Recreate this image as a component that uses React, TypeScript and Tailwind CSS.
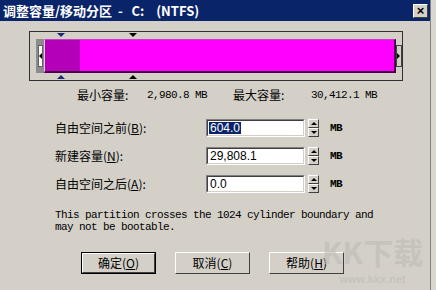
import React from "react";

const cjk = { fontFamily: '"Noto Sans CJK SC", "Noto Sans", sans-serif' };
const mono = { fontFamily: '"Liberation Mono", "DejaVu Sans Mono", monospace' };
const sans = { fontFamily: '"Liberation Sans", Arial, sans-serif' };

const Raised = ({ className = "", children }: { className?: string; children?: React.ReactNode }) => (
  <div className={`border border-t-white border-l-white border-r-[#404040] border-b-[#404040] bg-[#d4d0c8] ${className}`}>
    {children}
  </div>
);

const Spinner = () => (
  <div className="flex flex-col w-[11px] h-[18px] ml-[3px]">
    {["up", "down"].map((d) => (
      <Raised key={d} className="flex-1 flex items-center justify-center">
        <div
          className={
            d === "up"
              ? "w-0 h-0 border-l-[3px] border-r-[3px] border-b-[3px] border-l-transparent border-r-transparent border-b-black"
              : "w-0 h-0 border-l-[3px] border-r-[3px] border-t-[3px] border-l-transparent border-r-transparent border-t-black"
          }
        />
      </Raised>
    ))}
  </div>
);

type RowProps = { label: string; hotkey: string; value: string; selected?: boolean };

const FieldRow = ({ label, hotkey, value, selected }: RowProps) => (
  <div className="flex items-center h-[18px] pl-[55px]">
    <div className="w-[151px] text-[12px] leading-none text-black" style={cjk}>
      {label}(<span className="underline">{hotkey}</span>):
    </div>
    <div className="w-[99px] h-[18px] border border-t-[#808080] border-l-[#808080] border-r-white border-b-white">
      <div className="w-full h-full border border-t-[#404040] border-l-[#404040] border-r-[#d4d0c8] border-b-[#d4d0c8] bg-white flex items-center pl-[1px]">
        <span
          className={`text-[12px] leading-[12px] px-[1px] ${selected ? "bg-[#0a246a] text-white" : "text-black"}`}
          style={sans}
        >
          {value}
        </span>
      </div>
    </div>
    <Spinner />
    <span className="ml-[11px] text-[11px] tracking-[-0.6px] font-bold text-black" style={mono}>
      MB
    </span>
  </div>
);

const Button = ({ label, hotkey, isDefault }: { label: string; hotkey: string; isDefault?: boolean }) => (
  <div className={`w-[75px] h-[22px] ${isDefault ? "border border-black" : ""}`}>
    <Raised className="w-full h-full flex items-center justify-center">
      <span className="text-[12px] leading-none text-black" style={cjk}>
        {label}(<span className="underline">{hotkey}</span>)
      </span>
    </Raised>
  </div>
);

const Marker = ({ x, up, blue }: { x: number; up?: boolean; blue?: boolean }) => (
  <div
    className={`absolute w-0 h-0 border-l-[4px] border-r-[4px] border-l-transparent border-r-transparent ${
      up
        ? `bottom-[1px] border-b-[4px] ${blue ? "border-b-[#1a2a7a]" : "border-b-black"}`
        : `top-[1px] border-t-[4px] ${blue ? "border-t-[#1a2a7a]" : "border-t-black"}`
    }`}
    style={{ left: x }}
  />
);

export default function App() {
  return (
    <div className="relative w-[436px] h-[290px] flex bg-[#dad7d1] overflow-hidden">
      <div className="w-[431px] h-full bg-[#d4d0c8] flex flex-col border-r border-[#808080]">
        {/* title bar */}
        <div className="h-[21px] bg-[#0a246a] flex items-center justify-between pl-[3px] pr-[2px]">
          <span className="text-white text-[13px] font-bold leading-none whitespace-pre" style={cjk}>
            调整容量/移动分区  -   C:    (NTFS)
          </span>
          <Raised className="w-[15px] h-[14px] flex items-center justify-center">
            <span className="text-[13px] font-bold leading-none text-black" style={sans}>
              ×
            </span>
          </Raised>
        </div>

        {/* partition bar */}
        <div className="relative mt-[10px] ml-[29px] w-[374px] h-[50px] border border-[#303030] bg-[#d4d0c8]">
          <Marker x={27} blue />
          <Marker x={99} />
          <Marker x={27} up blue />
          <Marker x={99} up />
          <div className="flex items-stretch h-[34px] mt-[7px] ml-[6px]">
            <div className="w-[8px] bg-[#8c8c8c] flex items-center justify-center">
              <div className="w-[5px] h-[22px] bg-white border border-[#606060] flex items-center justify-center">
                <div className="w-0 h-0 border-t-[3px] border-b-[3px] border-r-[3px] border-t-transparent border-b-transparent border-r-black" />
              </div>
            </div>
            <div className="w-[352px] flex border-l border-l-[#f0c0f0] border-b-2 border-b-[#4a004a] border-r-2 border-r-[#4a004a] border-t border-t-[#c040c0]">
              <div className="w-[35px] bg-[#b400b8]" />
              <div className="flex-1 bg-[#ff00ff]" />
            </div>
            <div className="w-[6px] h-[22px] self-center border border-[#404040] bg-[#d4d0c8] flex items-center">
              <div className="w-0 h-0 border-t-[3px] border-b-[3px] border-l-[3px] border-t-transparent border-b-transparent border-l-black" />
            </div>
          </div>
        </div>

        {/* min / max */}
        <div className="mt-[8px] h-[12px] flex items-center pl-[77px] text-black">
          <span className="w-[70px] text-[12px] leading-none" style={cjk}>最小容量:</span>
          <span className="w-[86px] text-[11px] tracking-[-0.6px] leading-none" style={mono}>2,980.8 MB</span>
          <span className="w-[78px] text-[12px] leading-none" style={cjk}>最大容量:</span>
          <span className="text-[11px] tracking-[-0.6px] leading-none" style={mono}>30,412.1 MB</span>
        </div>

        {/* fields */}
        <div className="mt-[18px] flex flex-col gap-[10px]">
          <FieldRow label="自由空间之前" hotkey="B" value="604.0" selected />
          <FieldRow label="新建容量" hotkey="N" value="29,808.1" />
          <FieldRow label="自由空间之后" hotkey="A" value="0.0" />
        </div>

        {/* notice */}
        <div className="mt-[16px] pl-[55px] text-[11px] tracking-[-0.6px] leading-[12px] text-black" style={mono}>
          <div>This partition crosses the 1024 cylinder boundary and</div>
          <div>may not be bootable.</div>
        </div>

        {/* buttons */}
        <div className="mt-[19px] pl-[81px] flex gap-[19px]">
          <Button label="确定" hotkey="O" isDefault />
          <Button label="取消" hotkey="C" />
          <Button label="帮助" hotkey="H" />
        </div>
      </div>

      {/* watermark overlay */}
      <div className="absolute left-[322px] top-[236px] flex flex-col items-center pointer-events-none opacity-60 whitespace-nowrap">
        <span className="text-[30px] font-bold leading-none text-[#bdbbb7]" style={cjk}>
          KK下载
        </span>
        <span className="mt-[8px] text-[11px] font-bold leading-none text-[#bdbbb7]" style={sans}>
          www.kkx.net
        </span>
      </div>
    </div>
  );
}
